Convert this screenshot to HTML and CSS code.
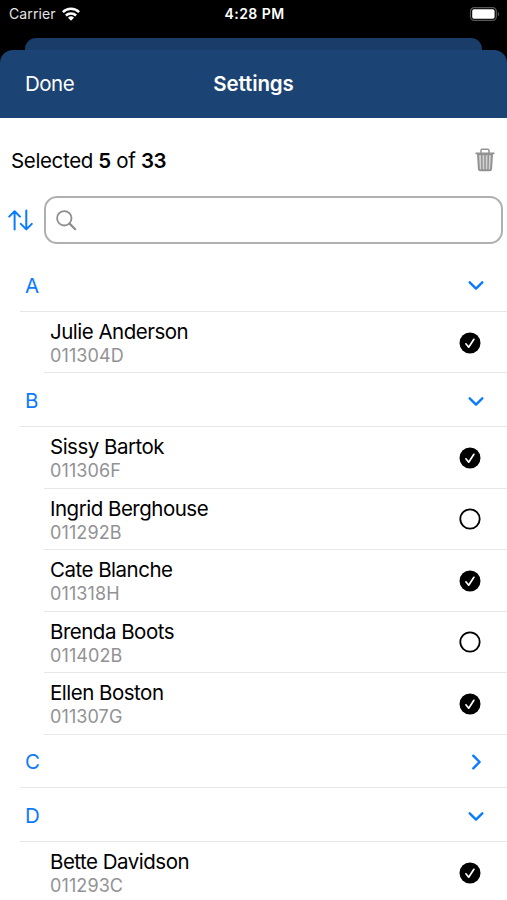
FILE: index.html
```html
<!DOCTYPE html>
<html lang="en">
  <head>
    <meta charset="UTF-8" />
    <meta name="viewport" content="width=device-width, initial-scale=1.0" />
    <title>Settings</title>
    <link rel="stylesheet" href="styles.css">
  </head>
  <body>
    <!-- shared icons -->
    <svg class="sprite" width="0" height="0">
      <symbol id="chevron" viewBox="0 0 18 18">
        <path d="M2.7 6.3 9 12.6l6.3-6.3" fill="none" stroke="currentColor" stroke-width="2.4" stroke-linecap="round" stroke-linejoin="round" />
      </symbol>
      <symbol id="checked" viewBox="0 0 22 22">
        <circle cx="11" cy="11" r="10.5" fill="#000" />
        <path d="M6.9 11.8 9.7 15.2 14.9 7.3" fill="none" stroke="#fff" stroke-width="1.7" stroke-linecap="round" stroke-linejoin="round" />
      </symbol>
      <symbol id="unchecked" viewBox="0 0 22 22">
        <circle cx="11" cy="11" r="9.7" fill="none" stroke="#000" stroke-width="1.8" />
      </symbol>
    </svg>

    <div class="status-bar">
      <div class="carrier">
        <span>Carrier</span>
        <svg width="18" height="14" viewBox="0 0 18 14">
          <g fill="none" stroke="#fff" stroke-width="2.5">
            <path d="M.9 5.2a11.5 11.5 0 0 1 16.2 0" />
            <path d="M3.9 8.5a7.2 7.2 0 0 1 10.2 0" />
          </g>
          <path d="M9 13.8 6 10.8a4.3 4.3 0 0 1 6 0z" fill="#fff" />
        </svg>
      </div>
      <span class="time">4:28 PM</span>
      <svg class="battery" width="31" height="14" viewBox="0 0 31 14">
        <rect x="1.5" y=".7" width="25.8" height="12.6" rx="3.6" fill="none" stroke="#58585a" stroke-width="1.2" />
        <rect x="3.2" y="2.3" width="22.4" height="9.4" rx="1.8" fill="#fff" />
        <path d="M28.8 4.8c1.8.7 1.8 3.7 0 4.4z" fill="#58585a" />
      </svg>
    </div>

    <div class="back-sheet"></div>

    <div class="sheet">
      <header class="nav">
        <span class="done">Done</span>
        <h1>Settings</h1>
      </header>

      <div class="summary">
        <p>Selected <b>5</b> of <b>33</b></p>
        <svg width="20" height="24" viewBox="0 0 20 24">
          <g fill="none" stroke="#929292" stroke-linejoin="round">
            <path d="M6 5V2.6Q6 1.3 7.3 1.3h5.4Q14 1.3 14 2.6V5" stroke-width="1.5" />
            <path d="M.5 5.4h19" stroke-width="1.9" />
            <path d="M3 6.2 3.9 21Q4 22.3 5.4 22.3h9.2Q16 22.3 16.1 21L17 6.2z" fill="#d2d2d2" stroke-width="2" />
            <path d="M6.7 6.5l.3 15.5M10 6.5V22M13.3 6.5l-.3 15.5" stroke-width="1.5" />
          </g>
        </svg>
      </div>

      <div class="search-row">
        <svg class="sort" width="26" height="22" viewBox="0 0 26 22">
          <path d="M6.6 20.5V2.5M1.2 7.6 6.6 2.2 12 7.6M18.3 1.5v18.5M12.8 14.9l5.5 5.5 5.5-5.5" fill="none" stroke="#0a7aff" stroke-width="2" stroke-linecap="round" stroke-linejoin="round" />
        </svg>
        <div class="search">
          <svg width="21" height="21" viewBox="0 0 21 21">
            <circle cx="8.3" cy="8.3" r="7.2" fill="none" stroke="#8e8e8e" stroke-width="1.8" />
            <path d="M13.6 13.6 19.2 19.2" stroke="#8e8e8e" stroke-width="2.2" stroke-linecap="round" />
          </svg>
        </div>
      </div>

      <div class="list">
        <div class="section"><span>A</span><svg><use href="#chevron" /></svg></div>
        <div class="row">
          <div class="person"><p class="name">Julie Anderson</p><p class="code">011304D</p></div>
          <svg><use href="#checked" /></svg>
        </div>

        <div class="section"><span>B</span><svg><use href="#chevron" /></svg></div>
        <div class="row">
          <div class="person"><p class="name">Sissy Bartok</p><p class="code">011306F</p></div>
          <svg><use href="#checked" /></svg>
        </div>
        <div class="row">
          <div class="person"><p class="name">Ingrid Berghouse</p><p class="code">011292B</p></div>
          <svg><use href="#unchecked" /></svg>
        </div>
        <div class="row">
          <div class="person"><p class="name">Cate Blanche</p><p class="code">011318H</p></div>
          <svg><use href="#checked" /></svg>
        </div>
        <div class="row">
          <div class="person"><p class="name">Brenda Boots</p><p class="code">011402B</p></div>
          <svg><use href="#unchecked" /></svg>
        </div>
        <div class="row">
          <div class="person"><p class="name">Ellen Boston</p><p class="code">011307G</p></div>
          <svg><use href="#checked" /></svg>
        </div>

        <div class="section collapsed"><span>C</span><svg><use href="#chevron" /></svg></div>

        <div class="section"><span>D</span><svg><use href="#chevron" /></svg></div>
        <div class="row">
          <div class="person"><p class="name">Bette Davidson</p><p class="code">011293C</p></div>
          <svg><use href="#checked" /></svg>
        </div>
      </div>
    </div>
  </body>
</html>
```
FILE: styles.css
```css
* {
  box-sizing: border-box;
}
body {
  margin: 0;
  height: 900px;
  overflow: hidden;
  display: flex;
  flex-direction: column;
  background: #000;
  color: #000;
  font-family: Inter, "Liberation Sans", sans-serif;
  font-size: 20.5px;
  letter-spacing: -0.5px;
}
h1,
p {
  margin: 0;
}
svg {
  display: block;
  flex: none;
}
.sprite {
  position: absolute;
}

/* status bar */
.status-bar {
  flex: none;
  height: 38px;
  padding: 0 7px 11px 9px;
  display: grid;
  grid-template-columns: 1fr auto 1fr;
  align-items: center;
  color: #fff;
  font-size: 14px;
}
.carrier {
  display: flex;
  align-items: center;
  gap: 6px;
  color: #e4e4e4;
  letter-spacing: 0.1px;
}
.time {
  font-weight: 600;
  letter-spacing: 0.45px;
}
.battery {
  justify-self: end;
}

/* sheets */
.back-sheet {
  flex: none;
  height: 12px;
  margin: 0 25px;
  border-radius: 11px 11px 0 0;
  background: #193c68;
}
.sheet {
  flex: none;
  height: 850px;
  overflow: hidden;
  border-radius: 13px 13px 0 0;
  background: linear-gradient(#1b4374 68px, #fff 68px);
}
.nav {
  height: 68px;
  padding: 0 25px 1px;
  display: grid;
  grid-template-columns: 1fr auto 1fr;
  align-items: center;
  color: #fff;
}
.nav h1 {
  font-size: 20.5px;
  font-weight: 600;
  letter-spacing: -0.1px;
}

.summary {
  height: 78px;
  padding: 6px 12px 0 11px;
  display: flex;
  align-items: center;
  justify-content: space-between;
  letter-spacing: -0.35px;
}
.summary b {
  font-weight: 600;
}
.search-row {
  display: flex;
  align-items: center;
  padding: 0 4px 0 8px;
  gap: 10px;
}
.search {
  flex: 1;
  height: 48px;
  padding-left: 10px;
  display: flex;
  align-items: center;
  border: 2px solid #b0b0b0;
  border-radius: 13px;
}

/* people */
.list {
  margin-top: 14px;
}
.section {
  height: 53.75px;
  margin-left: 20px;
  padding: 2px 22px 0 5px;
  display: flex;
  align-items: center;
  justify-content: space-between;
  border-bottom: 1px solid #e6e6e8;
  color: #0a7aff;
}
.section svg {
  width: 18px;
  height: 18px;
}
.collapsed svg {
  transform: rotate(-90deg);
}
.row {
  height: 61.5px;
  margin-left: 44px;
  padding: 1px 25.7px 0 6px;
  display: flex;
  align-items: center;
  justify-content: space-between;
  border-bottom: 1px solid #e8e8ea;
}
.row svg {
  width: 22px;
  height: 22px;
}
.person {
  padding-top: 1.5px;
}
.name {
  line-height: 24px;
}
.code {
  color: #929295;
  font-size: 18px;
  line-height: 23px;
  letter-spacing: 0.1px;
}
```
